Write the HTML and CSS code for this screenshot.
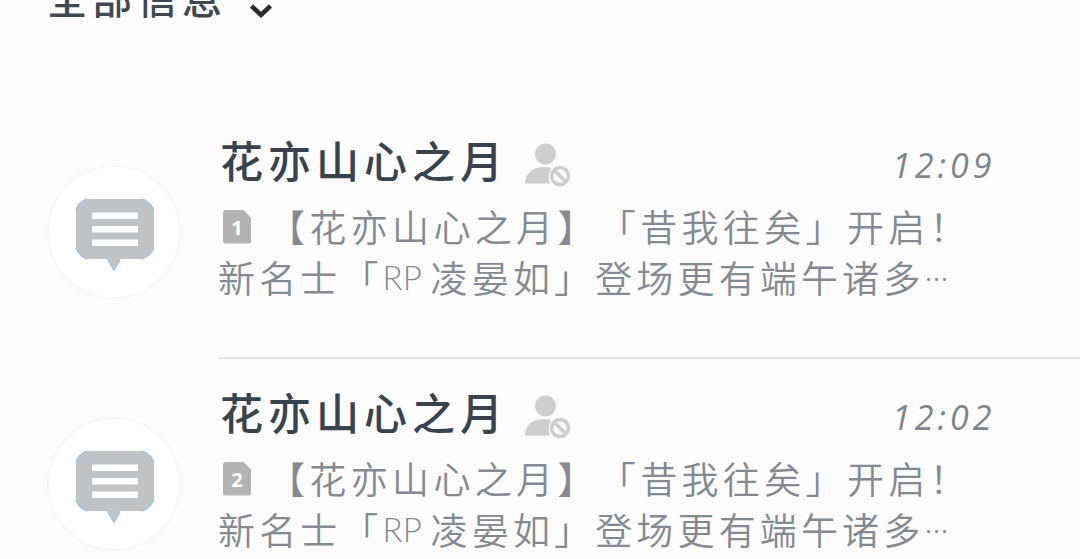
FILE: index.html
```html
<!DOCTYPE html>
<html lang="zh-CN">
<head>
  <meta charset="UTF-8">
  <title>全部信息</title>
  <link rel="stylesheet" href="styles.css">
</head>
<body>
  <svg class="defs" width="0" height="0">
    <symbol id="bubble" viewBox="0 0 80 74">
      <path d="M12 1H67Q75 4 79 12V50Q75 58 67 61H45L39 72L32 61H12Q4 58 1 50V12Q4 4 12 1Z" fill="#bfc3c6"/>
      <path d="M1 12Q4 4 12 1M67 1Q75 4 79 12M79 50Q75 58 67 61M12 61Q4 58 1 50M33 62L39 72L45 62" fill="none" stroke="#a3c3e6" stroke-width="1.5"/>
      <path d="M17 14.500H63V21H17ZM17 28H63V34.500H17ZM17 41.500H63V48H17Z" fill="#fff"/>
    </symbol>
    <symbol id="blocked" viewBox="0 0 46 44">
      <circle cx="20.500" cy="11" r="10.500" fill="#cdcdcd"/>
      <path d="M0 40.500Q1 24 20 24Q23 24 26 25Q22 33 25 40.500Z" fill="#cdcdcd"/>
      <circle cx="35" cy="33" r="8.500" fill="none" stroke="#cdcdcd" stroke-width="3.5"/>
      <path d="M29 27L41 39" stroke="#cdcdcd" stroke-width="3.5"/>
    </symbol>
  </svg>

  <div class="header">
    <span class="filter">全部信息</span>
    <svg class="arrow" viewBox="0 0 24 16"><path d="M2.500 3L12 12L21.500 3" fill="none" stroke="#2b2b2b" stroke-width="4.500"/></svg>
  </div>

  <div class="list">
    <div class="item">
      <div class="avatar"><svg><use href="#bubble"/></svg></div>
      <div class="content">
        <div class="top">
          <span class="name">花亦山心之月</span>
          <svg class="blocked"><use href="#blocked"/></svg>
          <span class="time">12:09</span>
        </div>
        <div class="msg">
          <div class="line first"><span class="sim">1</span>【花亦山心之月】「昔我往矣」开启！</div>
          <div class="line">新名士「<span class="latin">RP</span>凌晏如」登场更有端午诸多<span class="dots">…</span></div>
        </div>
      </div>
    </div>

    <div class="item">
      <div class="avatar"><svg><use href="#bubble"/></svg></div>
      <div class="content">
        <div class="top">
          <span class="name">花亦山心之月</span>
          <svg class="blocked"><use href="#blocked"/></svg>
          <span class="time">12:02</span>
        </div>
        <div class="msg">
          <div class="line first"><span class="sim">2</span>【花亦山心之月】「昔我往矣」开启！</div>
          <div class="line">新名士「<span class="latin">RP</span>凌晏如」登场更有端午诸多<span class="dots">…</span></div>
        </div>
      </div>
    </div>
  </div>
</body>
</html>
```
FILE: styles.css
```css
body { margin: 0; height: 559px; overflow: hidden; background: #fcfcfc; font-family: "Noto Sans CJK SC", sans-serif; text-spacing-trim: space-all; }
.defs { display: block; }
.header { display: flex; align-items: flex-start; height: 107px; padding-left: 47px; }
.filter { width: 202px; margin-top: -28px; font-size: 40px; line-height: 50px; letter-spacing: 5px; font-weight: 500; color: #3f4954; white-space: nowrap; }
.arrow { width: 24px; height: 16px; margin-top: 3px; }
.list { height: 452px; overflow: hidden; }
.item { display: flex; height: 252px; padding-left: 49px; }
.avatar { display: flex; justify-content: center; width: 130px; height: 130px; margin: 58px 37px 0 -2px; border: 2px solid #f7f7f7; border-radius: 50%; background: #fff; }
.avatar svg { width: 80px; height: 74px; margin: 31px 0 0 2px; }
.content { flex: 1; box-sizing: border-box; height: 252px; padding-top: 21px; border-bottom: 2px solid #e5e5e5; }
.top { display: flex; height: 73px; }
.name { width: 305px; padding-left: 2px; font-size: 43px; line-height: 62px; letter-spacing: 5px; font-weight: 500; color: #38434f; white-space: nowrap; }
.blocked { width: 46px; height: 44px; margin-top: 15px; }
.time { margin-left: 321px; font-family: "Open Sans", sans-serif; font-size: 34px; line-height: 75px; font-style: italic; font-weight: 500; letter-spacing: 4px; color: #7f868d; }
.msg { font-size: 37px; line-height: 51px; font-weight: 350; color: #838a92; }
.line { display: flex; align-items: center; height: 51px; letter-spacing: 4.15px; white-space: nowrap; }
.first { letter-spacing: 4.35px; }
.sim { flex: none; width: 28px; height: 34px; margin: 0 17px 0 5px; background: #b3b3b3; border-radius: 3px; clip-path: polygon(0 0, 20px 0, 28px 8px, 28px 100%, 0 100%); font: bold 20px/35px "Open Sans", sans-serif; letter-spacing: 0; text-align: center; color: #fff; }
.latin { width: 48px; font-family: Lato, sans-serif; font-size: 33px; letter-spacing: 0; }
.dots { font-size: 24px; letter-spacing: 0; }
```
